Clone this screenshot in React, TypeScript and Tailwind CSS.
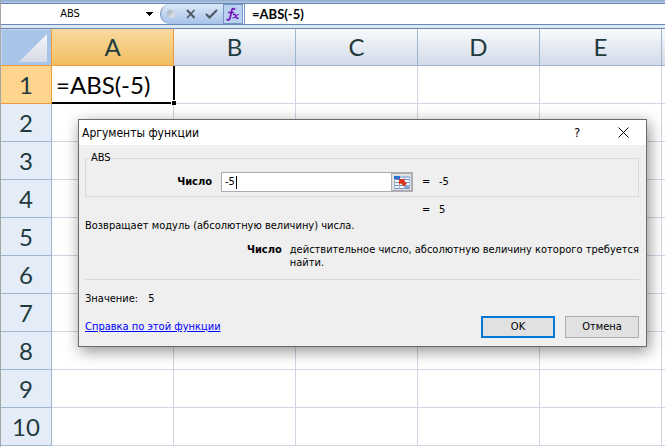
import React from "react";

const columns = ["A", "B", "C", "D", "E"];
const rows = [1, 2, 3, 4, 5, 6, 7, 8, 9, 10];

function FormulaBar() {
  return (
    <div className="flex h-[22px] shrink-0 border-y border-[#6789b3] bg-white">
      <div className="flex w-[159px] items-center">
        <input
          aria-label="Имя ячейки"
          defaultValue="ABS"
          className="w-[138px] bg-transparent text-center font-['DejaVu_Sans_Condensed','Noto_Sans',sans-serif] text-[11px] leading-4 outline-none"
        />
        <button aria-label="Список имён" className="flex h-5 w-5 items-center justify-center">
          <svg width="7" height="4" viewBox="0 0 7 4" shapeRendering="crispEdges">
            <path d="M0 0h7v1H6v1H5v1H4v1H3V3H2V2H1V1H0z" fill="#000" />
          </svg>
        </button>
      </div>
      <div className="flex w-[85px] items-center justify-end rounded-l-full border-l border-[#6789b3] bg-linear-to-b from-[#dce8f8] to-[#a6c1e8]">
        <span className="mr-2 h-2 w-2 rounded-full bg-linear-to-br from-[#9ea7b5] to-[#f4f6f9]" />
        <button aria-label="Отмена ввода" className="flex h-5 w-4 items-center justify-center">
          <svg width="10" height="10" viewBox="0 0 10 10" fill="none" stroke="#4d5661">
            <path d="M1 1l7.5 8" strokeWidth="2" />
            <path d="M8.5 1L1 9" strokeWidth="1.6" />
          </svg>
        </button>
        <button aria-label="Ввод" className="ml-1 mr-1 flex h-5 w-4 items-center justify-center">
          <svg width="13" height="10" viewBox="0 0 13 10" fill="none" stroke="#4d5661">
            <path d="M1 5l3.5 3.5L12 1" strokeWidth="2" />
          </svg>
        </button>
        <button aria-label="Вставить функцию" className="flex h-5 w-5 items-center justify-center border border-[#7396c4] bg-[#b9d0f0]">
          <svg width="14" height="15" viewBox="0 0 14 15" fill="none" stroke="#7414b8" strokeLinecap="round">
            <path d="M8.5 2.2C7 .8 6 2 5.600 4L4.300 10C3.800 12.800 2.500 13.500 1.200 12.500" strokeWidth="1.800" />
            <path d="M2.500 5.500h5" strokeWidth="1.400" />
            <path d="M7.500 7.500c1.500-.6 2 .3 2.300 1.700s.7 2.600 2.200 1.800" strokeWidth="1.500" />
            <path d="M12.500 7.500c-1.500-.3-3.500 3.500-5.500 3.500" strokeWidth="1.200" />
          </svg>
        </button>
        <span className="h-5 w-[2px] border-r border-[#7396c4] bg-white" />
      </div>
      <input
        aria-label="Строка формул"
        defaultValue="=ABS(-5)"
        className="min-w-0 flex-1 bg-white pl-[7px] font-['Lato',sans-serif] text-[13px] font-bold leading-5 outline-none"
      />
    </div>
  );
}

function Sheet() {
  return (
    <table className="w-full table-fixed border-separate border-spacing-0 font-['Lato',sans-serif] text-[24px] leading-9 text-[#1f3b3d]">
      <thead>
        <tr className="h-[37px]">
          <th className="w-[51px] border-b border-r border-[#f09a3e] bg-[#a9c4e9] p-0">
            <div className="flex h-9 items-end justify-end border-l border-t border-[#c5d8f1] pb-[3px] pr-1">
              <svg width="28" height="28" viewBox="0 0 28 28">
                <defs>
                  <linearGradient id="corner" x1="0" y1="0" x2="0" y2="1">
                    <stop offset="0" stopColor="#f5f7fa" />
                    <stop offset="1" stopColor="#d5dbe6" />
                  </linearGradient>
                </defs>
                <path d="M28 0v28H0z" fill="url(#corner)" />
              </svg>
            </div>
          </th>
          {columns.map((name) => (
            <th
              key={name}
              scope="col"
              className={
                name === "A"
                  ? "w-[122px] border-b border-r border-[#f09a3e] bg-linear-to-b from-[#f9d99f] to-[#f1bf60] p-0 font-normal"
                  : "w-[122px] border-b border-r border-[#9eb6ce] bg-linear-to-b from-[#f8fafc] to-[#d3dbe9] p-0 font-normal"
              }
            >
              <div className="h-9">{name}</div>
            </th>
          ))}
          <th className="border-b border-[#9eb6ce] bg-linear-to-b from-[#f8fafc] to-[#d3dbe9] p-0" />
        </tr>
      </thead>
      <tbody>
        {rows.map((row) => (
          <tr key={row} className="h-[38px]">
            <th
              scope="row"
              className={
                row === 1
                  ? "border-b border-r border-[#f09a3e] bg-[#ffd58d] p-0 font-normal"
                  : "border-b border-r border-[#9eb6ce] bg-[#e4ecf7] p-0 font-normal"
              }
            >
              {row}
            </th>
            {columns.map((name) =>
              row === 1 && name === "A" ? (
                <td key={name} className="relative p-0 pl-1 text-black">
                  =ABS(-5)
                  <span className="absolute inset-y-0 -right-px left-0 border-b-2 border-r-2 border-black" />
                  <span className="absolute -bottom-px -right-0.5 h-[5px] w-[5px] border-l border-t border-white bg-black" />
                </td>
              ) : (
                <td key={name} className="border-b border-r border-[#d0d4e3] p-0" />
              ),
            )}
            <td className="border-b border-[#d0d4e3] p-0" />
          </tr>
        ))}
      </tbody>
    </table>
  );
}

function RangeIcon() {
  return (
    <svg width="16" height="13" viewBox="0 0 16 13">
      <path d="M0 0h16v13H0z" fill="#f7faff" />
      <path d="M0 0h6v3H0z" fill="#2f6fd0" />
      <path d="M6 0h10v2H6z" fill="#a9c0e4" />
      <path d="M0 3.500h16M0 6.500h16M0 9.500h16M0 12.500h16" stroke="#6d8fc2" />
      <path d="M5.500 3v10M10.500 0v13M.5 3v10M15.500 0v13" stroke="#9db6da" />
      <path d="M11 9h4v3h-4z" fill="#85a7db" />
      <path d="M5 3h6L9.800 4.500l3.200 3-3 3-3-3.200L5 9z" fill="#d9361b" />
    </svg>
  );
}

function FunctionDialog() {
  return (
    <div
      role="dialog"
      aria-labelledby="dialog-title"
      className="absolute left-[77px] top-[119px] w-[569px] border border-[#6b6b6b] bg-[#efefef] font-['DejaVu_Sans_Condensed','Noto_Sans',sans-serif] text-[11px] leading-[14px] text-black shadow-[2px_4px_14px_rgba(0,0,0,0.45)]"
    >
      <div className="flex h-[25px] items-center bg-white pl-[3px]">
        <h1 id="dialog-title" className="flex-1 text-[12px]">Аргументы функции</h1>
        <button aria-label="Справка" className="w-[46px] text-[13px]">?</button>
        <button aria-label="Закрыть" className="flex h-6 w-[46px] items-center justify-center">
          <svg width="11" height="11" viewBox="0 0 11 11" stroke="#000">
            <path d="M.5.5l10 10M10.500.5l-10 10" />
          </svg>
        </button>
      </div>
      <div className="pb-2 pl-1.5 pr-[7px] pt-1.5">
        <fieldset className="h-[46px] border border-[#d9d9d9]">
          <legend className="ml-1 px-px">ABS</legend>
          <div className="mt-[7px] flex h-5 items-center">
            <label htmlFor="number" className="w-[126px] text-right font-bold">Число</label>
            <div className="relative ml-[9px] flex h-5 w-[192px] border border-[#abadb3] bg-white">
              <input
                id="number"
                defaultValue="-5"
                autoFocus
                className="min-w-0 flex-1 bg-transparent pl-[3px] caret-transparent outline-none"
              />
              <span className="absolute left-[14px] top-[3px] h-[13px] w-px bg-black" />
              <button aria-label="Выбрать диапазон" className="flex w-[21px] items-center justify-center border border-[#abadb3] bg-[#e1e1e1]">
                <RangeIcon />
              </button>
            </div>
            <span className="ml-[9px] w-[17px]">=</span>
            <span>-5</span>
          </div>
        </fieldset>
        <div className="mt-1.5 flex pl-[337px]">
          <span className="w-[17px]">=</span>
          <span>5</span>
        </div>
        <p className="mt-0.5">Возвращает модуль (абсолютную величину) числа.</p>
        <div className="mt-2.5 flex leading-[13px]">
          <b className="w-[198px] text-right">Число</b>
          <p className="ml-2 whitespace-nowrap">
            действительное число, абсолютную величину которого требуется
            <br />
            найти.
          </p>
        </div>
        <hr className="mt-2.5 border-[#d9d9d9]" />
        <p className="mt-3 flex gap-2.5">
          <span>Значение:</span>
          <span>5</span>
        </p>
        <div className="mt-2.5 flex items-center gap-2.5">
          <a href="#help" className="mr-auto text-[#0000ff] underline">Справка по этой функции</a>
          <button className="h-[22px] w-[74px] border-2 border-[#0078d7] bg-[#e1e1e1]">OK</button>
          <button className="h-[22px] w-[74px] border border-[#adadad] bg-[#e1e1e1]">Отмена</button>
        </div>
      </div>
    </div>
  );
}

export default function App() {
  return (
    <main className="relative flex h-screen flex-col overflow-hidden border-l border-[#a5a5a5] bg-white">
      <div className="h-[3px] shrink-0 bg-linear-to-b from-[#8fa9cc] to-[#b3c9e8]" />
      <FormulaBar />
      <div className="h-1 shrink-0 border-b border-[#6789b3] bg-[#dce8f6]" />
      <Sheet />
      <FunctionDialog />
    </main>
  );
}
